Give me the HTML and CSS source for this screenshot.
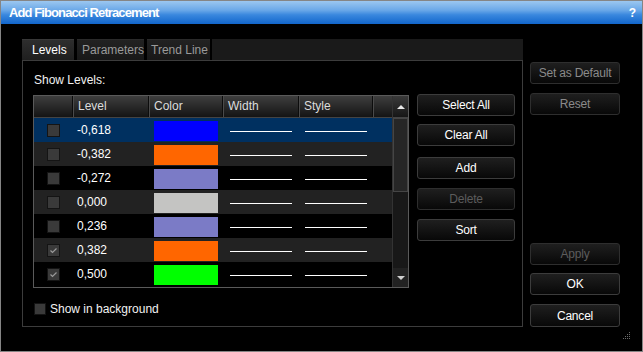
FILE: index.html
```html
<!DOCTYPE html>
<html lang="en">

<head>
  <meta charset="UTF-8">
  <title>Add Fibonacci Retracement</title>
  <link rel="stylesheet" href="styles.css">
</head>

<body>
  <div class="window">
    <div class="titlebar">
      <span class="title">Add Fibonacci Retracement</span>
      <span class="help">?</span>
    </div>

    <div class="main">
      <div class="tabs-area">
        <div class="tabbar">
          <div class="tab tab-levels active">Levels</div>
          <div class="tab tab-params">Parameters</div>
          <div class="tab tab-trend">Trend Line</div>
          <div class="tab-fill"></div>
        </div>

        <div class="panel">
          <div class="caption">Show Levels:</div>

          <div class="levels-row">
            <div class="levels-table">
              <div class="grid">
                <div class="head">
                  <div class="hcell c-check"></div>
                  <div class="hcell c-level">Level</div>
                  <div class="hcell c-color">Color</div>
                  <div class="hcell c-width">Width</div>
                  <div class="hcell c-style">Style</div>
                  <div class="hcell c-rest"></div>
                </div>

                <div class="row selected">
                  <div class="cell c-check"><span class="check"></span></div>
                  <div class="cell c-level">-0,618</div>
                  <div class="cell c-color"><span class="swatch blue"></span></div>
                  <div class="cell c-width"><span class="line"></span></div>
                  <div class="cell c-style"><span class="line"></span></div>
                </div>
                <div class="row odd">
                  <div class="cell c-check"><span class="check"></span></div>
                  <div class="cell c-level">-0,382</div>
                  <div class="cell c-color"><span class="swatch orange"></span></div>
                  <div class="cell c-width"><span class="line"></span></div>
                  <div class="cell c-style"><span class="line"></span></div>
                </div>
                <div class="row">
                  <div class="cell c-check"><span class="check"></span></div>
                  <div class="cell c-level">-0,272</div>
                  <div class="cell c-color"><span class="swatch lavender"></span></div>
                  <div class="cell c-width"><span class="line"></span></div>
                  <div class="cell c-style"><span class="line"></span></div>
                </div>
                <div class="row odd">
                  <div class="cell c-check"><span class="check"></span></div>
                  <div class="cell c-level">0,000</div>
                  <div class="cell c-color"><span class="swatch silver"></span></div>
                  <div class="cell c-width"><span class="line"></span></div>
                  <div class="cell c-style"><span class="line"></span></div>
                </div>
                <div class="row">
                  <div class="cell c-check"><span class="check"></span></div>
                  <div class="cell c-level">0,236</div>
                  <div class="cell c-color"><span class="swatch lavender"></span></div>
                  <div class="cell c-width"><span class="line"></span></div>
                  <div class="cell c-style"><span class="line"></span></div>
                </div>
                <div class="row odd">
                  <div class="cell c-check"><span class="check checked"><svg width="11" height="11" viewBox="0 0 11 11"><polyline points="2.5,5.5 4.5,7.5 8.5,3.5" fill="none" stroke="#9a9a9a" stroke-width="1.2"/></svg></span></div>
                  <div class="cell c-level">0,382</div>
                  <div class="cell c-color"><span class="swatch orange"></span></div>
                  <div class="cell c-width"><span class="line"></span></div>
                  <div class="cell c-style"><span class="line"></span></div>
                </div>
                <div class="row">
                  <div class="cell c-check"><span class="check checked"><svg width="11" height="11" viewBox="0 0 11 11"><polyline points="2.5,5.5 4.5,7.5 8.5,3.5" fill="none" stroke="#9a9a9a" stroke-width="1.2"/></svg></span></div>
                  <div class="cell c-level">0,500</div>
                  <div class="cell c-color"><span class="swatch green"></span></div>
                  <div class="cell c-width"><span class="line"></span></div>
                  <div class="cell c-style"><span class="line"></span></div>
                </div>
              </div>

              <div class="scrollbar">
                <div class="sb-up"><span class="arrow-up"></span></div>
                <div class="sb-track">
                  <div class="sb-thumb"></div>
                </div>
                <div class="sb-down"><span class="arrow-down"></span></div>
              </div>
            </div>

            <div class="list-buttons">
              <button class="btn btn-select">Select All</button>
              <button class="btn btn-clear">Clear All</button>
              <button class="btn btn-add">Add</button>
              <button class="btn btn-delete" disabled>Delete</button>
              <button class="btn btn-sort">Sort</button>
            </div>
          </div>

          <div class="bg-check">
            <span class="check small"></span>
            <span>Show in background</span>
          </div>
        </div>
      </div>

      <div class="side">
        <button class="btn side-btn muted" disabled>Set as Default</button>
        <button class="btn side-btn muted btn-reset" disabled>Reset</button>
        <div class="side-spacer"></div>
        <button class="btn side-btn" disabled>Apply</button>
        <button class="btn side-btn btn-ok">OK</button>
        <button class="btn side-btn btn-cancel">Cancel</button>
      </div>
    </div>

    <div class="grip">
      <svg width="9" height="9" viewBox="0 0 9 9">
        <rect x="7" y="1" width="1" height="1" fill="#6a6a6a"/>
        <rect x="5" y="3" width="1" height="1" fill="#6a6a6a"/>
        <rect x="7" y="3" width="1" height="1" fill="#6a6a6a"/>
        <rect x="3" y="5" width="1" height="1" fill="#6a6a6a"/>
        <rect x="5" y="5" width="1" height="1" fill="#6a6a6a"/>
        <rect x="7" y="5" width="1" height="1" fill="#6a6a6a"/>
        <rect x="1" y="7" width="1" height="1" fill="#6a6a6a"/>
        <rect x="3" y="7" width="1" height="1" fill="#6a6a6a"/>
        <rect x="5" y="7" width="1" height="1" fill="#6a6a6a"/>
        <rect x="7" y="7" width="1" height="1" fill="#6a6a6a"/>
      </svg>
    </div>
  </div>
</body>

</html>
```

FILE: styles.css
```css
* {
  box-sizing: border-box;
}

body {
  margin: 0;
  background-color: #000;
  font-family: 'Liberation Sans', Arial, sans-serif;
  font-size: 12px;
  color: #fff;
}

.window {
  position: relative;
  width: 643px;
  height: 352px;
  border: 1px solid #858585;
  background-color: #000;
}

/* title bar */
.titlebar {
  height: 23px;
  display: flex;
  align-items: center;
  justify-content: space-between;
  padding: 0 6px 0 8px;
  background: linear-gradient(#9cc7f0, #6aa8e8 40%, #3a88de 60%, #1266cc);
  color: #fff;
  font-size: 13px;
  font-weight: bold;
  letter-spacing: -0.9px;
}

.help {
  font-size: 12px;
  letter-spacing: 0;
}

/* main area */
.main {
  height: 327px;
  display: flex;
  padding: 15px 0 24px 21px;
}

.tabs-area {
  width: 501px;
  display: flex;
  flex-direction: column;
}

.tabbar {
  height: 21px;
  display: flex;
}

.tab {
  height: 21px;
  line-height: 20px;
  margin-right: 3px;
  padding-left: 5px;
  background: linear-gradient(#222, #181818);
  color: #9a9a9a;
  border-top: 1px solid #2a2a2a;
}

.tab.active {
  background: linear-gradient(#2e2e2e, #1f1f1f);
  color: #fff;
  padding-left: 10px;
  border-top: 1px solid #383838;
}

.tab-levels {
  width: 52px;
}

.tab-params {
  width: 67px;
}

.tab-trend {
  width: 63px;
  margin-right: 2px;
  padding-left: 4px;
}

.tab-fill {
  flex: 1;
  background-color: #1a1a1a;
}

.panel {
  height: 267px;
  border: 1px solid #3c3c3c;
  padding: 0 0 0 10px;
}

.caption {
  margin-top: 12px;
  height: 14px;
  line-height: 14px;
  padding-left: 1px;
  color: #f2f2f2;
}

.levels-row {
  display: flex;
  align-items: flex-start;
  margin-top: 8px;
}

/* levels table */
.levels-table {
  width: 376px;
  height: 193px;
  border: 1px solid #5a5a5a;
  display: flex;
}

.grid {
  flex: 1;
  display: flex;
  flex-direction: column;
}

.head {
  height: 22px;
  display: flex;
  background: linear-gradient(#3e3e3e, #141414);
  border-bottom: 1px solid #444;
}

.hcell {
  height: 21px;
  line-height: 21px;
  padding-left: 5px;
  color: #dcdcdc;
  border-right: 1px solid #0c0c0c;
  box-shadow: inset 1px 0 #4a4a4a;
}

.hcell.c-check {
  box-shadow: none;
}

.hcell.c-rest {
  flex: 1;
  border-right: none;
}

.c-check {
  width: 39px;
}

.c-level {
  width: 76px;
}

.c-color {
  width: 74px;
}

.c-width {
  width: 76px;
}

.c-style {
  width: 74px;
}

.row {
  height: 24px;
  flex-shrink: 0;
  display: flex;
  background-color: #000;
}

.row.odd {
  background-color: #222;
}

.row.selected {
  background-color: #003060;
}

.cell {
  height: 24px;
  display: flex;
  align-items: center;
}

.cell.c-check {
  justify-content: center;
}

.cell.c-level {
  padding-left: 4px;
  color: #fff;
}

.cell.c-color {
  align-items: flex-start;
  padding: 3px 0 0 5px;
}

.cell.c-width {
  padding-left: 7px;
}

.cell.c-style {
  padding-left: 6px;
}

.check {
  width: 13px;
  height: 13px;
  background-color: #3a3a3a;
  border: 1px solid #141414;
  display: flex;
  align-items: center;
  justify-content: center;
}

.check.small {
  width: 12px;
  height: 12px;
}

.swatch {
  width: 64px;
  height: 20px;
}

.swatch.blue {
  background-color: #0000ff;
}

.swatch.orange {
  background-color: #ff6600;
}

.swatch.lavender {
  background-color: #7b7bc6;
}

.swatch.silver {
  background-color: #c4c4c2;
}

.swatch.green {
  background-color: #00ff00;
}

.line {
  width: 62px;
  height: 1px;
  margin-top: 2px;
  background-color: #fff;
}

/* scrollbar */
.scrollbar {
  width: 16px;
  display: flex;
  flex-direction: column;
  background-color: #1a1a1a;
  border-left: 1px solid #333;
}

.sb-up {
  height: 22px;
  background: linear-gradient(#3a3a3a, #161616);
  border-bottom: 1px solid #444;
  display: flex;
  align-items: center;
  justify-content: center;
}

.sb-track {
  flex: 1;
  background-color: #181818;
}

.sb-thumb {
  height: 74px;
  background-color: #262626;
  border: 1px solid #454545;
}

.sb-down {
  height: 19px;
  background-color: #222;
  display: flex;
  align-items: center;
  justify-content: center;
}

.arrow-up {
  width: 0;
  height: 0;
  border-left: 4px solid transparent;
  border-right: 4px solid transparent;
  border-bottom: 4px solid #e8e8e8;
}

.arrow-down {
  width: 0;
  height: 0;
  border-left: 4px solid transparent;
  border-right: 4px solid transparent;
  border-top: 4px solid #d0d0d0;
}

/* buttons */
.btn {
  height: 22px;
  padding: 0;
  font-family: 'Liberation Sans', Arial, sans-serif;
  font-size: 12px;
  color: #fff;
  background: linear-gradient(#1f1f1f, #080808);
  border: 1px solid #3c3c3c;
  border-radius: 3px;
  letter-spacing: -0.2px;
}

.btn:disabled {
  color: #5c5c5c;
  border-color: #2e2e2e;
}

.btn.muted:disabled {
  color: #8a8a8a;
}

.list-buttons {
  width: 98px;
  margin-left: 8px;
  margin-top: -1px;
  display: flex;
  flex-direction: column;
}

.btn-clear {
  margin-top: 8px;
}

.btn-add {
  margin-top: 11px;
}

.btn-delete,
.btn-sort {
  margin-top: 9px;
}

.bg-check {
  display: flex;
  align-items: center;
  gap: 4px;
  margin-top: 14px;
  padding-left: 1px;
  color: #f2f2f2;
}

/* right column */
.side {
  width: 90px;
  margin-left: 7px;
  padding-top: 23px;
  display: flex;
  flex-direction: column;
}

.side-btn {
  width: 90px;
}

.btn-reset {
  margin-top: 9px;
}

.side-spacer {
  flex: 1;
}

.btn-ok {
  margin-top: 8px;
}

.btn-cancel {
  margin-top: 9px;
  height: 23px;
}

.grip {
  position: absolute;
  right: 11px;
  bottom: 11px;
  width: 9px;
  height: 9px;
}

.grip svg {
  display: block;
}
```
